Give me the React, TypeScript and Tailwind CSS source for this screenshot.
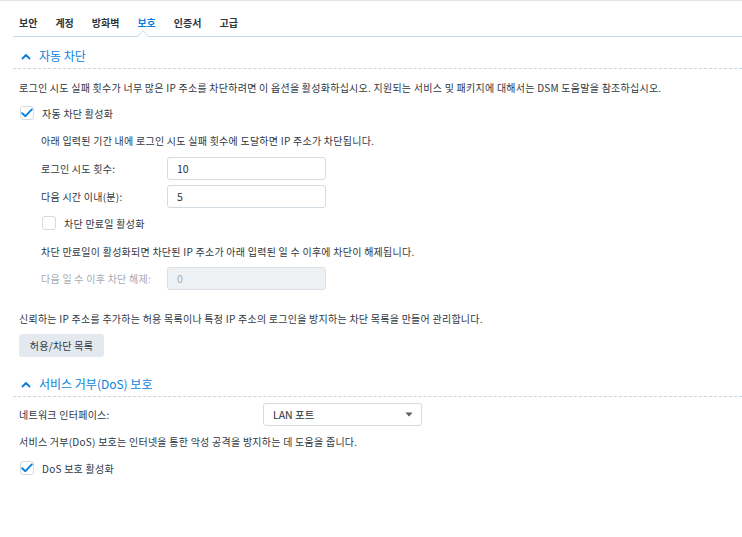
import React from "react";

const font = { fontFamily: '"Noto Sans CJK KR", "Noto Sans", sans-serif' };

function Check({ checked }: { checked: boolean }) {
  return (
    <div className="w-[14px] h-[14px] rounded-[3px] border border-[#d3dae2] bg-white flex items-center justify-center shrink-0">
      {checked && (
        <svg width="12" height="10" viewBox="0 0 12 10">
          <path d="M1.2 5.2 L4.4 8.2 L10.8 1.4" fill="none" stroke="#0a7fe0" strokeWidth="1.9" strokeLinecap="round" strokeLinejoin="round" />
        </svg>
      )}
    </div>
  );
}

function Chevron() {
  return (
    <svg width="10" height="7" viewBox="0 0 10 7" className="shrink-0">
      <path d="M1.5 5.5 L5 2 L8.5 5.5" fill="none" stroke="#0a7fe0" strokeWidth="1.8" strokeLinecap="round" strokeLinejoin="round" />
    </svg>
  );
}

function Input({ value, disabled }: { value: string; disabled?: boolean }) {
  return (
    <div
      className={`w-[159px] h-[23px] rounded-[3px] border flex items-center pl-[9px] text-[10.5px] tracking-normal ${
        disabled ? "bg-[#eef1f4] border-[#d9dfe5] text-[#a4abb3]" : "bg-white border-[#d3dbe3] text-[#2a323a]"
      }`}
    >
      {value}
    </div>
  );
}

export default function App() {
  const tabs = ["보안", "계정", "방화벽", "보호", "인증서", "고급"];
  return (
    <div className="w-[742px] h-[537px] bg-white border-t border-[#dde3e9] text-[#2f373f] text-[10px] tracking-[0.25px]" style={font}>
      <div className="pl-[13px]">
        {/* tabs */}
        <div className="relative h-[36px] border-b border-[#c9d5e0] pt-[7px] pl-[6px] flex items-center gap-[18px] font-semibold text-[10px] tracking-normal">
          {tabs.map((t) => (
            <span key={t} className={t === "보호" ? "text-[#0a7fe0]" : "text-[#2d353d]"}>
              {t}
            </span>
          ))}
          <svg className="absolute left-[124px] bottom-[-1px]" width="12" height="7" viewBox="0 0 12 7">
            <path d="M0 6.5 L6 0.8 L12 6.5" fill="white" stroke="#c9d5e0" strokeWidth="1" />
            <rect x="0.5" y="6.3" width="11" height="1" fill="white" />
          </svg>
        </div>

        {/* section 1 header */}
        <div className="h-[32px] border-b border-dashed border-[#c6d5e3] pt-[7px] pl-[8px] flex items-center gap-[8px] text-[#0a7fe0] text-[12px] tracking-normal">
          <Chevron />
          <span>자동 차단</span>
        </div>

        <div className="pl-[6px]">
          <div className="h-[24px] mt-[6px] flex items-center">
            로그인 시도 실패 횟수가 너무 많은 IP 주소를 차단하려면 이 옵션을 활성화하십시오. 지원되는 서비스 및 패키지에 대해서는 DSM 도움말을 참조하십시오.
          </div>
          <div className="h-[24px] mt-[2px] flex items-center gap-[8px] pl-[1px]">
            <Check checked />
            <span>자동 차단 활성화</span>
          </div>
          <div className="pl-[22px]">
            <div className="h-[24px] mt-[3px] flex items-center">
              아래 입력된 기간 내에 로그인 시도 실패 횟수에 도달하면 IP 주소가 차단됩니다.
            </div>
            <div className="h-[23px] mt-[5px] flex items-center">
              <span className="w-[126px]">로그인 시도 횟수:</span>
              <Input value="10" />
            </div>
            <div className="h-[23px] mt-[5px] flex items-center">
              <span className="w-[126px]">다음 시간 이내(분):</span>
              <Input value="5" />
            </div>
            <div className="h-[24px] mt-[3px] flex items-center gap-[8px] pl-[1px]">
              <Check checked={false} />
              <span>차단 만료일 활성화</span>
            </div>
            <div className="h-[24px] mt-[4px] flex items-center">
              차단 만료일이 활성화되면 차단된 IP 주소가 아래 입력된 일 수 이후에 차단이 해제됩니다.
            </div>
            <div className="h-[23px] mt-[4px] flex items-center">
              <span className="w-[126px] text-[#a4abb3]">다음 일 수 이후 차단 해제:</span>
              <Input value="0" disabled />
            </div>
          </div>
          <div className="h-[24px] mt-[16px] flex items-center">
            신뢰하는 IP 주소를 추가하는 허용 목록이나 특정 IP 주소의 로그인을 방지하는 차단 목록을 만들어 관리합니다.
          </div>
          <div className="mt-[4px] w-[85px] h-[23px] rounded-[3px] bg-[#e3e9ef] flex items-center justify-center text-[#2d353d]">
            허용/차단 목록
          </div>
        </div>

        {/* section 2 header */}
        <div className="h-[40px] border-b border-dashed border-[#c6d5e3] pt-[15px] pl-[8px] flex items-center gap-[8px] text-[#0a7fe0] text-[12px] tracking-normal">
          <Chevron />
          <span>서비스 거부(DoS) 보호</span>
        </div>

        <div className="pl-[6px]">
          <div className="h-[23px] mt-[6px] flex items-center">
            <span className="w-[244px]">네트워크 인터페이스:</span>
            <div className="w-[159px] h-[23px] rounded-[3px] border border-[#d3dbe3] bg-white flex items-center justify-between pl-[9px] pr-[8px] text-[10.5px] tracking-normal text-[#2a323a]">
              <span>LAN 포트</span>
              <svg width="8" height="5" viewBox="0 0 8 5">
                <path d="M0.5 0.5 L7.5 0.5 L4 4.5 Z" fill="#555d66" />
              </svg>
            </div>
          </div>
          <div className="h-[24px] mt-[3px] flex items-center">
            서비스 거부(DoS) 보호는 인터넷을 통한 악성 공격을 방지하는 데 도움을 줍니다.
          </div>
          <div className="h-[24px] mt-[3px] flex items-center gap-[8px] pl-[1px]">
            <Check checked />
            <span>DoS 보호 활성화</span>
          </div>
        </div>
      </div>
    </div>
  );
}
